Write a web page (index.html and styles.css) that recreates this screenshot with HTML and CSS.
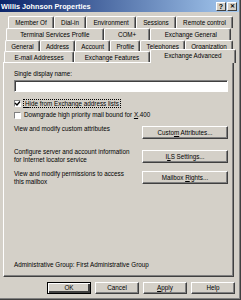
FILE: index.html
```html
<!DOCTYPE html>
<html lang="en">
<head>
    <meta charset="UTF-8">
    <title>Willis Johnson Properties</title>
    <link rel="stylesheet" href="styles.css">
</head>
<body>
    <div class="window">
        <div class="titlebar">
            <span class="title">Willis Johnson Properties</span>
            <div class="caption-btns">
                <span class="cbtn">?</span>
                <span class="cbtn close">&#x2715;</span>
            </div>
        </div>

        <div class="tabs">
            <div class="tab-row row1">
                <div class="tab">Member Of</div>
                <div class="tab">Dial-in</div>
                <div class="tab">Environment</div>
                <div class="tab">Sessions</div>
                <div class="tab">Remote control</div>
            </div>
            <div class="tab-row row2">
                <div class="tab">Terminal Services Profile</div>
                <div class="tab">COM+</div>
                <div class="tab">Exchange General</div>
            </div>
            <div class="tab-row row3">
                <div class="tab">General</div>
                <div class="tab">Address</div>
                <div class="tab">Account</div>
                <div class="tab">Profile</div>
                <div class="tab">Telephones</div>
                <div class="tab">Organization</div>
            </div>
            <div class="tab-row row4">
                <div class="tab">E-mail Addresses</div>
                <div class="tab">Exchange Features</div>
                <div class="tab active">Exchange Advanced</div>
            </div>
        </div>

        <div class="panel">
            <div class="label">Single display name:</div>
            <div class="textbox"></div>

            <div class="check-row first">
                <span class="checkbox checked">
                    <svg width="7" height="7" viewBox="0 0 7 7"><path d="M1 3 L3 5 L6 1.5" fill="none" stroke="#000" stroke-width="1.3"/></svg>
                </span>
                <span class="focus"><u>H</u>ide from Exchange address lists</span>
            </div>
            <div class="check-row">
                <span class="checkbox"></span>
                <span>Downgrade high priority mail bound for <u>X</u>.400</span>
            </div>

            <div class="action-row a1">
                <div class="action-text">View and modify custom attributes</div>
                <div class="btn side">Custo<u>m</u> Attributes...</div>
            </div>
            <div class="action-row a2">
                <div class="action-text">Configure server and account information<br>for Internet locator service</div>
                <div class="btn side">I<u>L</u>S Settings...</div>
            </div>
            <div class="action-row a3">
                <div class="action-text">View and modify permissions to access<br>this mailbox</div>
                <div class="btn side">Mailbox <u>R</u>ights...</div>
            </div>

            <div class="admin">Administrative Group: First Administrative Group</div>
        </div>

        <div class="footer">
            <div class="btn default">OK</div>
            <div class="btn">Cancel</div>
            <div class="btn"><u>A</u>pply</div>
            <div class="btn">Help</div>
        </div>
    </div>
</body>
</html>
```

FILE: styles.css
```css
* {
    box-sizing: border-box;
}

body {
    margin: 0;
    background-color: #d4d0c8;
    font-family: "Liberation Sans", Arial, sans-serif;
    font-size: 6.3px;
    color: #000000;
}

.window {
    width: 241px;
    height: 300px;
    background-color: #d4d0c8;
    border-right: 1px solid #404040;
    border-bottom: 1px solid #404040;
    box-shadow: inset -1px -1px 0 #808080;
    display: flex;
    flex-direction: column;
}

/* title bar */
.titlebar {
    height: 12px;
    margin-right: 1px;
    background: linear-gradient(to right, #0a246a, #a6caf0);
    display: flex;
    align-items: center;
    justify-content: space-between;
    padding: 0 2px 0 1px;
}

.title {
    color: #ffffff;
    font-weight: bold;
    font-size: 7.3px;
}

.caption-btns {
    display: flex;
}

.cbtn {
    width: 10px;
    height: 9px;
    background-color: #d4d0c8;
    border-top: 1px solid #ffffff;
    border-left: 1px solid #ffffff;
    border-right: 1px solid #404040;
    border-bottom: 1px solid #404040;
    font-size: 7px;
    font-weight: bold;
    line-height: 7px;
    text-align: center;
}

.cbtn.close {
    margin-left: 1px;
    font-size: 6px;
}

/* tabs */
.tabs {
    padding-top: 4px;
    height: 50px;
}

.tab-row {
    display: flex;
    height: 12px;
}

.row1 {
    margin-left: 8px;
    width: 225px;
}

.row2 {
    margin-left: 6px;
    width: 225px;
}

.row3 {
    margin-left: 5px;
    width: 228px;
    height: 11px;
}

.row4 {
    margin-left: 4px;
    width: 230px;
    height: 11px;
    position: relative;
    z-index: 1;
}

.tab {
    flex: 1 1 auto;
    white-space: nowrap;
    text-align: center;
    line-height: 11px;
    border-top: 1px solid #ffffff;
    border-left: 1px solid #ffffff;
    border-right: 1px solid #404040;
    border-radius: 2px 2px 0 0;
    box-shadow: inset -1px 0 0 #808080;
    background-color: #d4d0c8;
}

.tab.active {
    flex-grow: 1.4;
    margin: -2px -2px -1px 0;
    height: 14px;
    line-height: 12px;
}

/* panel */
.panel {
    height: 215px;
    margin: 0 6px 0 3px;
    border-top: 1px solid #ffffff;
    border-left: 1px solid #ffffff;
    border-right: 1px solid #404040;
    border-bottom: 1px solid #404040;
    box-shadow: inset -1px -1px 0 #808080;
    padding: 7px 6px 7px 10px;
    display: flex;
    flex-direction: column;
    line-height: 8px;
}

.textbox {
    margin-top: 2px;
    height: 12px;
    width: 214px;
    background-color: #ffffff;
    border-top: 1px solid #808080;
    border-left: 1px solid #808080;
    border-right: 1px solid #ffffff;
    border-bottom: 1px solid #ffffff;
    box-shadow: inset 1px 1px 0 #404040;
}

.check-row {
    display: flex;
    align-items: center;
    margin-top: 4px;
    height: 8px;
    white-space: nowrap;
}

.check-row.first {
    margin-top: 7px;
}

.checkbox {
    width: 7px;
    height: 7px;
    margin-right: 3px;
    background-color: #ffffff;
    border-top: 1px solid #808080;
    border-left: 1px solid #808080;
    border-right: 1px solid #ffffff;
    border-bottom: 1px solid #ffffff;
    display: flex;
    align-items: center;
    justify-content: center;
}

.checkbox svg {
    display: block;
    flex: none;
}

.focus {
    outline: 1px dotted #000000;
    padding: 0 1px;
    line-height: 7px;
}

.action-row {
    display: flex;
    justify-content: space-between;
    align-items: flex-start;
    width: 214px;
}

.a1 {
    margin-top: 6px;
}

.a1 .btn {
    margin-top: 1px;
}

.a2 {
    margin-top: 9px;
}

.a2 .btn {
    margin-top: 2px;
}

.a3 {
    margin-top: 6px;
}

.a3 .btn {
    margin-top: 1px;
}

.admin {
    margin-top: auto;
}

/* buttons */
.btn {
    width: 44px;
    height: 12px;
    text-align: center;
    line-height: 10px;
    white-space: nowrap;
    background-color: #d4d0c8;
    border-top: 1px solid #ffffff;
    border-left: 1px solid #ffffff;
    border-right: 1px solid #404040;
    border-bottom: 1px solid #404040;
    box-shadow: inset -1px -1px 0 #808080;
}

.btn.side {
    width: 86px;
    height: 13px;
    line-height: 11px;
}

.btn.default {
    border: 1px solid #000000;
    box-shadow: inset 1px 1px 0 #ffffff, inset -2px -2px 0 #404040, inset -1px -1px 0 #808080;
}

.footer {
    display: flex;
    justify-content: flex-end;
    gap: 4px;
    margin-top: 5px;
    padding-right: 5px;
}
```
